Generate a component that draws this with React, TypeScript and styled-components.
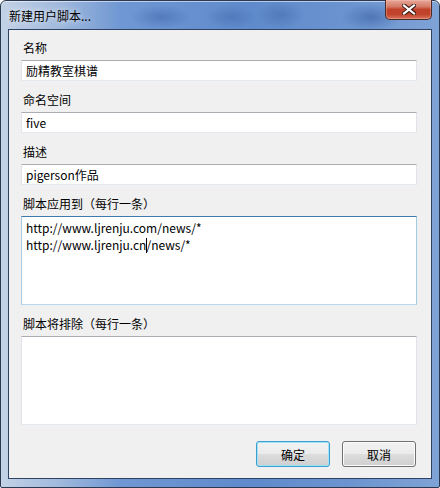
import styled, { createGlobalStyle } from 'styled-components';

const GlobalStyle = createGlobalStyle`
  html, body {
    margin: 0;
    padding: 0;
    background: #ffffff;
  }
  body {
    font-family: "Noto Sans CJK SC", "Noto Sans", sans-serif;
    font-size: 12px;
    color: #000;
  }
`;

export default function App() {
  return (
    <>
      <GlobalStyle />
      <Window>
        <TitleBar>
          <Title>新建用户脚本...</Title>
          <CloseButton aria-label="关闭">
            <svg width="14" height="11" viewBox="0 0 14 11">
              <path
                d="M2 1.5 L12 9.5 M12 1.5 L2 9.5"
                stroke="#3a1a14"
                strokeWidth="4.2"
                strokeLinecap="square"
                fill="none"
              />
              <path
                d="M2 1.5 L12 9.5 M12 1.5 L2 9.5"
                stroke="#ffffff"
                strokeWidth="2.2"
                strokeLinecap="square"
                fill="none"
              />
            </svg>
          </CloseButton>
        </TitleBar>
        <Client>
          <Field>
            <Label>名称</Label>
            <Input>励精教室棋谱</Input>
          </Field>
          <Field>
            <Label>命名空间</Label>
            <Input>five</Input>
          </Field>
          <Field>
            <Label>描述</Label>
            <Input>pigerson作品</Input>
          </Field>
          <Field>
            <Label>脚本应用到（每行一条）</Label>
            <TextArea $focused>
              <Line>http://www.ljrenju.com/news/*</Line>
              <Line>
                http://www.ljrenju.cn
                <Caret />
                /news/*
              </Line>
            </TextArea>
          </Field>
          <Field>
            <Label>脚本将排除（每行一条）</Label>
            <TextArea />
          </Field>
          <Buttons>
            <Button $default>确定</Button>
            <Button>取消</Button>
          </Buttons>
        </Client>
      </Window>
    </>
  );
}

const Window = styled.div`
  box-sizing: border-box;
  width: 440px;
  height: 488px;
  padding: 0 7px 8px 7px;
  border: 1px solid #2b3a52;
  border-radius: 6px 6px 2px 2px;
  display: flex;
  flex-direction: column;
  background:
    radial-gradient(ellipse 30px 12px at 160px 16px, rgba(40, 80, 150, 0.35), transparent),
    radial-gradient(ellipse 26px 12px at 230px 16px, rgba(40, 80, 150, 0.3), transparent),
    radial-gradient(ellipse 24px 14px at 280px 14px, rgba(40, 80, 150, 0.3), transparent),
    radial-gradient(ellipse 30px 14px at 370px 16px, rgba(30, 70, 140, 0.4), transparent),
    linear-gradient(to right, #c3d2e6 0px, #9fb8dc 60px, #6f97d3 120px, #5f8acb 250px, #6a93cf 340px, #7fa3d6 440px);
  box-shadow: inset 0 1px 0 rgba(255, 255, 255, 0.55);
`;

const TitleBar = styled.div`
  height: 28px;
  display: flex;
  justify-content: space-between;
  align-items: flex-start;
`;

const Title = styled.span`
  padding-left: 1px;
  line-height: 30px;
  font-size: 12px;
  color: #000;
  text-shadow: 0 0 6px rgba(255, 255, 255, 0.9);
`;

const CloseButton = styled.div`
  box-sizing: border-box;
  width: 47px;
  height: 20px;
  margin-top: -1px;
  border: 1px solid #4a2a28;
  border-top: none;
  border-radius: 0 0 5px 5px;
  display: flex;
  align-items: center;
  justify-content: center;
  background: linear-gradient(
    to bottom,
    #e8a89a 0%,
    #d47a66 35%,
    #c2412a 50%,
    #c0432b 75%,
    #d9735a 100%
  );
  box-shadow: inset 0 0 0 1px rgba(255, 200, 190, 0.35);
`;

const Client = styled.div`
  flex: 1;
  display: flex;
  flex-direction: column;
  padding: 11px 14px 0 12px;
  border: 1px solid #2e4264;
  background: #f0f0f0;
`;

const Field = styled.div`
  display: flex;
  flex-direction: column;
  margin-bottom: 12px;
`;

const Label = styled.span`
  padding-left: 2px;
  line-height: 14px;
  height: 14px;
  margin-bottom: 5px;
  font-size: 12px;
`;

const Input = styled.div`
  box-sizing: border-box;
  height: 21px;
  padding: 0 4px;
  line-height: 19px;
  font-size: 12px;
  background: #fff;
  border: 1px solid;
  border-color: #abadb3 #e2e3ea #e3e9ef #e2e3ea;
  white-space: nowrap;
`;

const TextArea = styled.div<{ $focused?: boolean }>`
  box-sizing: border-box;
  height: 89px;
  padding: 2px 4px;
  background: #fff;
  border: 1px solid;
  border-color: ${(p) =>
    p.$focused
      ? '#3d7bad #a4c9e3 #b7d9ed #a4c9e3'
      : '#abadb3 #e2e3ea #e3e9ef #e2e3ea'};
`;

const Line = styled.div`
  line-height: 17px;
  font-size: 12px;
  white-space: nowrap;
`;

const Caret = styled.span`
  display: inline-block;
  width: 1px;
  height: 15px;
  margin: 0 -1px 0 0;
  vertical-align: -3px;
  background: #000;
`;

const Buttons = styled.div`
  display: flex;
  justify-content: flex-end;
  gap: 12px;
  margin-top: 4px;
  padding-right: 1px;
`;

const Button = styled.div<{ $default?: boolean }>`
  box-sizing: border-box;
  width: 74px;
  height: 26px;
  display: flex;
  align-items: center;
  justify-content: center;
  font-size: 12px;
  border-radius: 3px;
  border: 1px solid ${(p) => (p.$default ? '#3c9fd0' : '#707070')};
  box-shadow: inset 0 0 0 1px ${(p) => (p.$default ? '#9fe3f7' : '#fcfcfc')};
  background: linear-gradient(
    to bottom,
    #f2f2f2 0%,
    #ebebeb 50%,
    #dddddd 51%,
    #cfcfcf 100%
  );
`;
